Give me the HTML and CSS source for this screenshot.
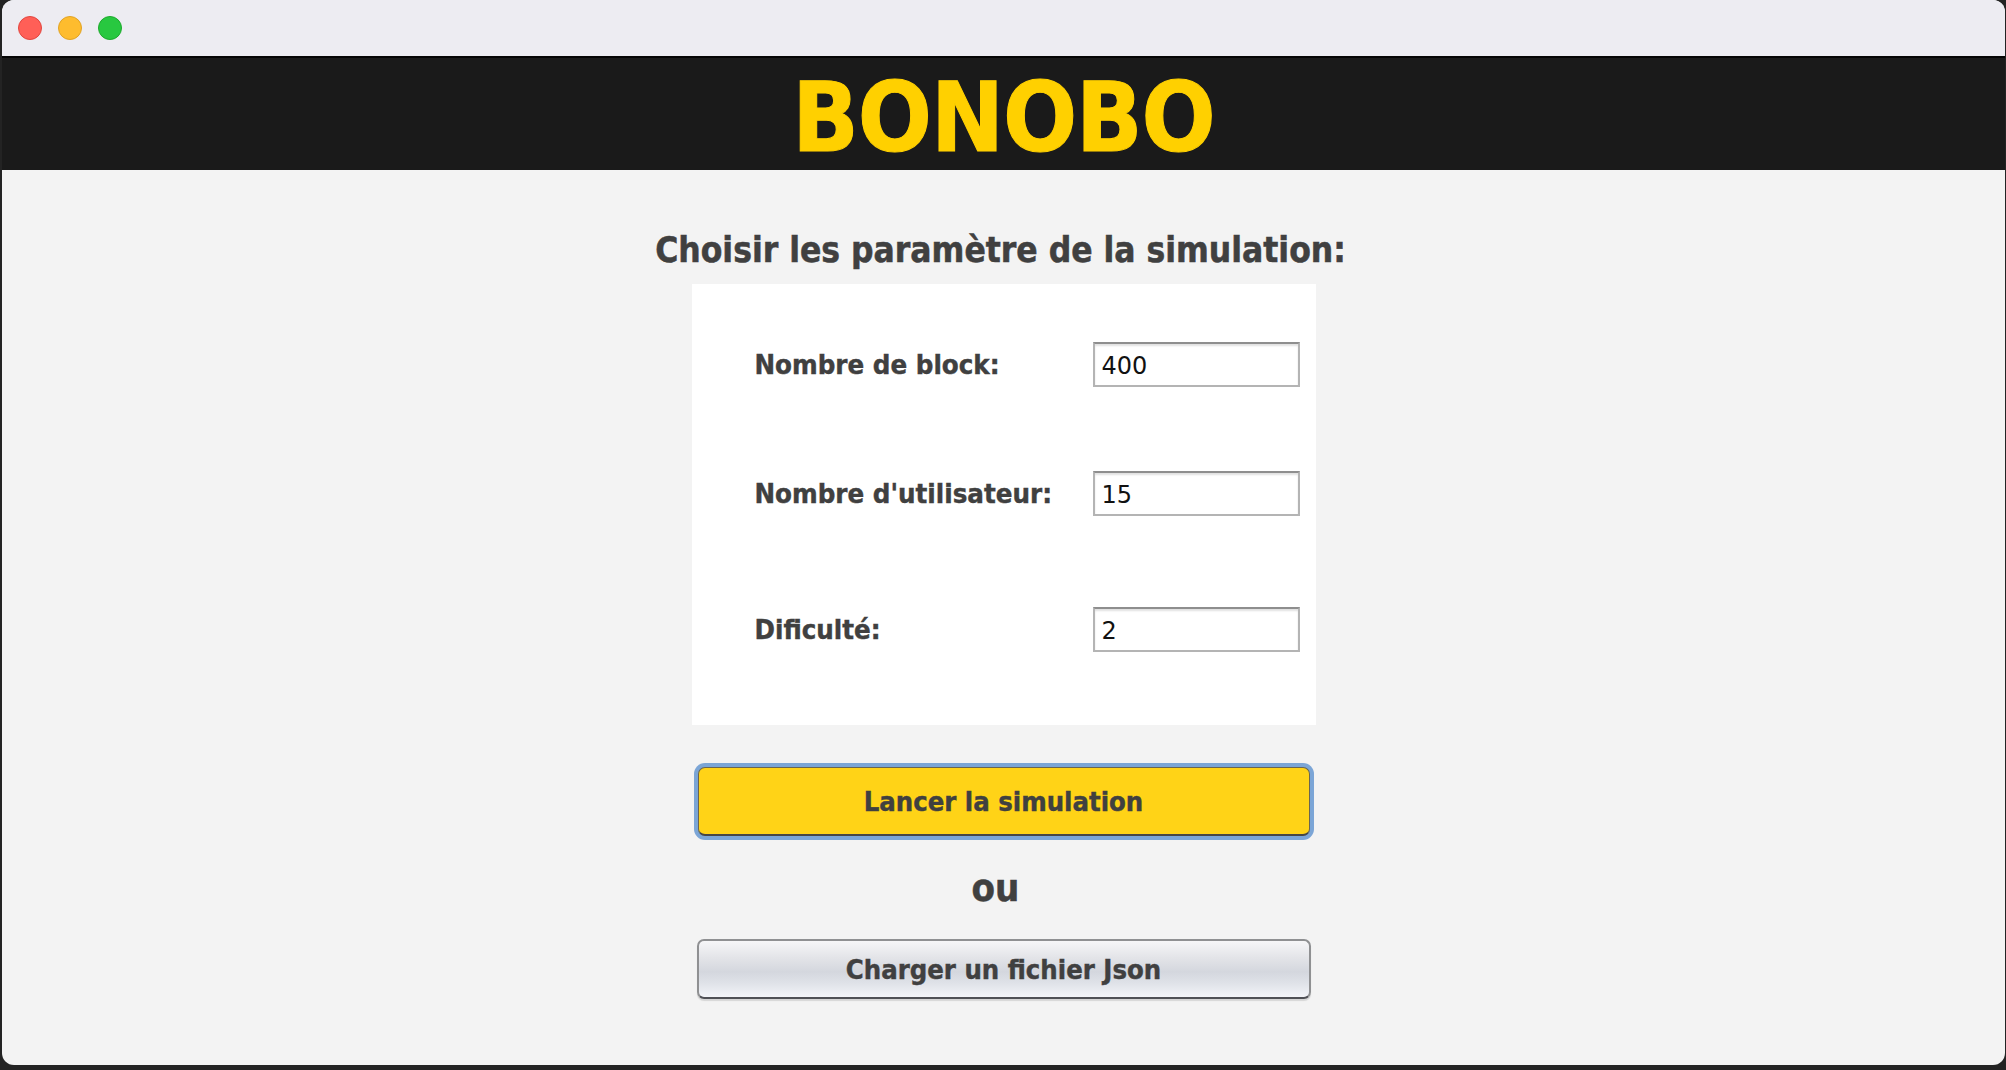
FILE: index.html
```html
<!DOCTYPE html>
<html lang="fr">
<head>
<meta charset="utf-8">
<title>BONOBO</title>
<link rel="stylesheet" href="styles.css">
</head>
<body>
<div class="window">
  <div class="titlebar">
    <span class="light light-red"></span>
    <span class="light light-yellow"></span>
    <span class="light light-green"></span>
  </div>
  <header class="header">
    <h1 class="logo">BONOBO</h1>
  </header>
  <main class="content">
    <h2 class="heading">Choisir les paramètre de la simulation:</h2>
    <div class="panel">
      <div class="row">
        <label class="label">Nombre de block:</label>
        <input class="field" type="text" value="400">
      </div>
      <div class="row row-2">
        <label class="label">Nombre d'utilisateur:</label>
        <input class="field" type="text" value="15">
      </div>
      <div class="row row-3">
        <label class="label">Dificulté:</label>
        <input class="field" type="text" value="2">
      </div>
    </div>
    <button class="btn btn-primary">Lancer la simulation</button>
    <div class="or">ou</div>
    <button class="btn btn-secondary">Charger un fichier Json</button>
  </main>
</div>
</body>
</html>
```
FILE: styles.css
```css
* { box-sizing: border-box; }
html, body { margin: 0; padding: 0; }
body {
  width: 2006px;
  height: 1070px;
  background: #232323;
  overflow: hidden;
  font-family: "DejaVu Sans Condensed", "DejaVu Sans", sans-serif;
  font-stretch: condensed;
}
.window {
  margin-left: 2px;
  width: 2003px;
  height: 1065px;
  border-radius: 12px;
  overflow: hidden;
  background: #f3f3f3;
  display: flex;
  flex-direction: column;
}
.titlebar {
  height: 56px;
  background: #edecf2;
  display: flex;
  align-items: center;
  gap: 16px;
  padding-left: 16px;
  padding-bottom: 1px;
}
.light {
  width: 24px;
  height: 24px;
  border-radius: 50%;
  display: block;
}
.light-red { background: #ff5f57; border: 1px solid #e2463f; }
.light-yellow { background: #febc2e; border: 1px solid #e1a325; }
.light-green { background: #28c840; border: 1px solid #1daa2c; }
.header {
  height: 114px;
  background: #1a1a1a;
  border-top: 2px solid #050505;
  padding-top: 10px;
  text-align: center;
}
.logo {
  margin: 0;
  font-size: 97px;
  line-height: 100px;
  font-weight: bold;
  letter-spacing: -1px;
  color: #ffd000;
  -webkit-text-stroke: 1px #ffd000;
}
.content {
  flex: 1;
  display: flex;
  flex-direction: column;
  align-items: center;
  color: #404040;
}
.heading {
  margin: 60px 0 0 -6px;
  font-size: 35px;
  line-height: 40px;
  font-weight: bold;
  -webkit-text-stroke: 0.5px #404040;
}
.panel {
  margin-top: 14px;
  width: 624px;
  height: 441px;
  background: #ffffff;
  padding: 58px 16px 0 63px;
  display: flex;
  flex-direction: column;
}
.row {
  display: flex;
  align-items: center;
  justify-content: space-between;
  height: 45px;
}
.row-2 { margin-top: 84px; }
.row-3 { margin-top: 91px; }
.label {
  font-size: 27.4px;
  font-weight: bold;
  color: #404040;
  -webkit-text-stroke: 0.4px #404040;
}
.field {
  width: 207px;
  height: 45px;
  border: 2px solid #b4b4b4;
  border-top-color: #8e8e8e;
  box-shadow: inset 0 2px 2px rgba(0,0,0,0.12);
  background: #fff;
  padding: 2px 0 0 7px;
  font-family: "DejaVu Sans", sans-serif;
  font-stretch: normal;
  font-size: 24px;
  color: #111;
  outline: none;
}
.btn {
  font-family: "DejaVu Sans Condensed", "DejaVu Sans", sans-serif;
  font-stretch: condensed;
  font-weight: bold;
  font-size: 27.2px;
  color: #404040;
  -webkit-text-stroke: 0.4px #404040;
  cursor: pointer;
}
.btn-primary {
  margin-top: 42px;
  width: 612px;
  height: 69px;
  background: #ffd317;
  border: 1px solid #6a6550;
  border-bottom: 2px solid #464646;
  border-radius: 7px;
  box-shadow: 0 0 0 4px #7ba5d6;
  padding: 0;
}
.or {
  margin-top: 30px;
  padding-right: 16px;
  font-size: 38px;
  line-height: 44px;
  font-weight: bold;
  -webkit-text-stroke: 0.5px #404040;
}
.btn-secondary {
  margin-top: 29px;
  width: 614px;
  height: 60px;
  border: 2px solid #8f9092;
  border-bottom-color: #4f5055;
  border-radius: 7px;
  background: linear-gradient(#f6f6f8 0%, #e3e4e8 30%, #d4d7de 55%, #dfe2e8 75%, #f3f4f8 100%);
  box-shadow: 0 2px 1px rgba(0,0,0,0.12);
  padding: 0;
}
```
